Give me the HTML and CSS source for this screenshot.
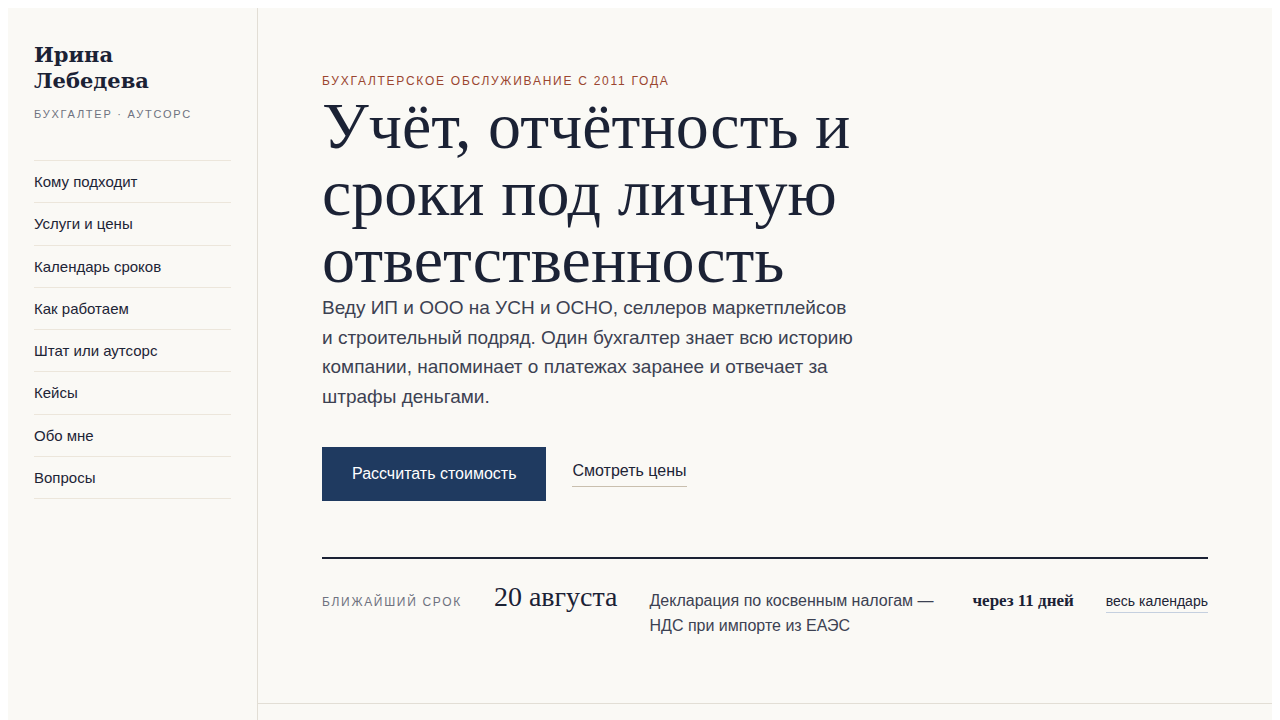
FILE: index.html
```html
<!DOCTYPE html>
<html lang="ru">
<head>
<meta charset="utf-8">
<title>Ирина Лебедева — бухгалтер</title>
<link rel="stylesheet" href="styles.css">
</head>
<body>
<div class="page">
  <aside class="sidebar">
    <div class="brand">
      <div class="brand-name">Ирина<br>Лебедева</div>
      <div class="brand-role">Бухгалтер · аутсорс</div>
    </div>
    <nav class="nav">
      <a class="nav-item" href="#">Кому подходит</a>
      <a class="nav-item" href="#">Услуги и цены</a>
      <a class="nav-item" href="#">Календарь сроков</a>
      <a class="nav-item" href="#">Как работаем</a>
      <a class="nav-item" href="#">Штат или аутсорс</a>
      <a class="nav-item" href="#">Кейсы</a>
      <a class="nav-item" href="#">Обо мне</a>
      <a class="nav-item" href="#">Вопросы</a>
    </nav>
  </aside>
  <main class="main">
    <section class="hero">
      <div class="eyebrow">Бухгалтерское обслуживание с 2011 года</div>
      <h1 class="title">Учёт, отчётность и сроки под личную ответственность</h1>
      <p class="lead">Веду ИП и ООО на УСН и ОСНО, селлеров маркетплейсов и строительный подряд. Один бухгалтер знает всю историю компании, напоминает о платежах заранее и отвечает за штрафы деньгами.</p>
      <div class="actions">
        <a class="btn" href="#">Рассчитать стоимость</a>
        <a class="link" href="#">Смотреть цены</a>
      </div>
      <div class="deadline">
        <div class="deadline-label">Ближайший срок</div>
        <div class="deadline-date">20 августа</div>
        <div class="deadline-desc">Декларация по косвенным налогам — НДС при импорте из ЕАЭС</div>
        <div class="deadline-left">через 11 дней</div>
        <a class="deadline-link" href="#">весь календарь</a>
      </div>
    </section>
  </main>
</div>
</body>
</html>
```

FILE: styles.css
```css
body {
  margin: 8px;
  background: #ffffff;
  font-family: "Liberation Sans", Arial, sans-serif;
  color: #1d2436;
}

.page {
  display: grid;
  grid-template-columns: 250px 1fr;
  min-height: 720px;
  background: #faf9f5;
}

.sidebar {
  border-right: 1px solid #e2ded5;
  padding: 34px 26px;
}

.brand-name {
  font-family: "DejaVu Serif", Georgia, serif;
  font-weight: 700;
  font-size: 21px;
  line-height: 26px;
  color: #1b2235;
}

.brand-role {
  margin-top: 14px;
  font-size: 11px;
  letter-spacing: 0.16em;
  text-transform: uppercase;
  color: #6e7280;
}

.nav {
  margin-top: 40px;
  display: flex;
  flex-direction: column;
  border-top: 1px solid #ece6db;
}

.nav-item {
  display: block;
  padding: 10px 0 10.25px;
  font-size: 15px;
  line-height: 21px;
  color: #1d2436;
  text-decoration: none;
  border-bottom: 1px solid #ece6db;
}

.main {
  min-width: 0;
}

.hero {
  padding: 65px 64px 0;
  border-bottom: 1px solid #e2ded5;
}

.eyebrow {
  font-size: 12px;
  line-height: 16px;
  letter-spacing: 0.145em;
  text-transform: uppercase;
  color: #9a4630;
}

.title {
  margin: 3px 0 0;
  max-width: 580px;
  font-family: "Liberation Serif", Georgia, serif;
  font-weight: 400;
  font-size: 66px;
  line-height: 67px;
  color: #1b2235;
}

.lead {
  margin: 0;
  max-width: 536px;
  font-size: 19px;
  line-height: 29.7px;
  color: #3c4152;
}

.actions {
  margin-top: 35px;
  display: flex;
  align-items: center;
  gap: 26px;
}

.btn {
  display: inline-block;
  padding: 17px 30px;
  background: #1f3a60;
  color: #ffffff;
  font-size: 16px;
  line-height: 20px;
  text-decoration: none;
}

.link {
  color: #1d2436;
  font-size: 16px;
  line-height: 20px;
  text-decoration: none;
  padding-bottom: 5px;
  border-bottom: 1px solid #c9bfae;
}

.deadline {
  margin-top: 56px;
  border-top: 2px solid #1b2235;
  padding: 22px 0 65px;
  display: flex;
  align-items: baseline;
  gap: 32px;
}

.deadline-label {
  font-size: 12px;
  letter-spacing: 0.14em;
  text-transform: uppercase;
  color: #6e7280;
  white-space: nowrap;
}

.deadline-date {
  font-family: "Liberation Serif", Georgia, serif;
  font-size: 28px;
  color: #1b2235;
  white-space: nowrap;
}

.deadline-desc {
  flex: 1;
  font-size: 16px;
  line-height: 25px;
  color: #3c4152;
}

.deadline-left {
  font-family: "Liberation Serif", Georgia, serif;
  font-weight: 700;
  font-size: 17px;
  color: #1b2235;
  white-space: nowrap;
}

.deadline-link {
  font-size: 14px;
  color: #1d2436;
  text-decoration: none;
  padding-bottom: 3px;
  border-bottom: 1px solid #c5d0df;
  white-space: nowrap;
}
```
